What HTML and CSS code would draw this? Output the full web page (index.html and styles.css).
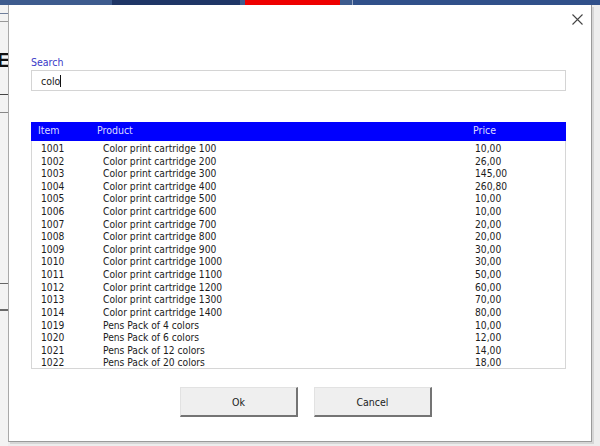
FILE: index.html
```html
<!DOCTYPE html>
<html>
<head>
<meta charset="utf-8">
<link rel="stylesheet" href="styles.css">
</head>
<body>
<div class="app">
  <div class="topbar">
    <span class="seg seg-a"></span>
    <span class="seg seg-b"></span>
    <span class="seg seg-c"></span>
    <span class="seg seg-red"></span>
    <span class="seg seg-c2"></span>
    <span class="seg seg-sep"></span>
    <span class="seg seg-rest"></span>
  </div>
  <div class="back">
    <div class="strip">
      <div class="sl l1"></div>
      <div class="sl l2"></div>
      <div class="big-e">E</div>
      <div class="sl l3"></div>
      <div class="sl l4"></div>
      <div class="sl l5"></div>
      <div class="sl l6"></div>
    </div>
  </div>

  <div class="dialog">
    <button class="close" aria-label="Close">
      <svg width="11" height="11" viewBox="0 0 11 11"><path d="M0.5 0.5 L10.5 10.5 M10.5 0.5 L0.5 10.5" stroke="#444" stroke-width="1.1" fill="none"/></svg>
    </button>
    <label class="search-label">Search</label>
    <div class="search-box"><span class="typed">colo</span><span class="caret"></span></div>

    <div class="list">
      <div class="list-head">
        <span>Item</span><span>Product</span><span>Price</span>
      </div>
      <div class="list-body">
        <div class="row"><span>1001</span><span>Color print cartridge 100</span><span>10,00</span></div>
        <div class="row"><span>1002</span><span>Color print cartridge 200</span><span>26,00</span></div>
        <div class="row"><span>1003</span><span>Color print cartridge 300</span><span>145,00</span></div>
        <div class="row"><span>1004</span><span>Color print cartridge 400</span><span>260,80</span></div>
        <div class="row"><span>1005</span><span>Color print cartridge 500</span><span>10,00</span></div>
        <div class="row"><span>1006</span><span>Color print cartridge 600</span><span>10,00</span></div>
        <div class="row"><span>1007</span><span>Color print cartridge 700</span><span>20,00</span></div>
        <div class="row"><span>1008</span><span>Color print cartridge 800</span><span>20,00</span></div>
        <div class="row"><span>1009</span><span>Color print cartridge 900</span><span>30,00</span></div>
        <div class="row"><span>1010</span><span>Color print cartridge 1000</span><span>30,00</span></div>
        <div class="row"><span>1011</span><span>Color print cartridge 1100</span><span>50,00</span></div>
        <div class="row"><span>1012</span><span>Color print cartridge 1200</span><span>60,00</span></div>
        <div class="row"><span>1013</span><span>Color print cartridge 1300</span><span>70,00</span></div>
        <div class="row"><span>1014</span><span>Color print cartridge 1400</span><span>80,00</span></div>
        <div class="row"><span>1019</span><span>Pens Pack of 4 colors</span><span>10,00</span></div>
        <div class="row"><span>1020</span><span>Pens Pack of 6 colors</span><span>12,00</span></div>
        <div class="row"><span>1021</span><span>Pens Pack of 12 colors</span><span>14,00</span></div>
        <div class="row"><span>1022</span><span>Pens Pack of 20 colors</span><span>18,00</span></div>
      </div>
    </div>

    <div class="buttons">
      <button class="btn">Ok</button>
      <button class="btn">Cancel</button>
    </div>
  </div>
</div>
</body>
</html>
```
FILE: styles.css
```css
html, body {
  margin: 0;
  padding: 0;
}
body {
  width: 600px;
  height: 446px;
  overflow: hidden;
  background: #ededed;
  font-family: "DejaVu Sans Condensed", "DejaVu Sans", sans-serif;
  font-stretch: condensed;
}
.app {
  position: relative;
  width: 600px;
  height: 446px;
}
.topbar {
  display: flex;
  height: 5px;
}
.seg { display: block; height: 5px; }
.seg-a { width: 112px; background: #3d5b8e; }
.seg-b { width: 128px; background: #1f3666; }
.seg-c { width: 5px; background: #3d5b8e; }
.seg-red { width: 95px; background: #ee0000; }
.seg-c2 { width: 12px; background: #3d5b8e; }
.seg-sep { width: 1px; background: #9aa9c6; }
.seg-rest { flex: 1; background: #30508a; }

.back {
  display: flex;
  height: 441px;
}
.strip {
  position: relative;
  width: 8px;
  overflow: hidden;
  background: #f3f3f3;
}
.sl {
  position: absolute;
  left: 0;
  width: 8px;
  height: 1px;
  background: #555;
}
.l1 { top: 8px; background: #6f7f9c; }
.l2 { top: 16px; background: #999; }
.l3 { top: 89px; background: #444; }
.l4 { top: 107px; background: #888; }
.l5 { top: 278px; background: #666; }
.l6 { top: 304px; height: 2px; background: #6a6a6a; }
.big-e {
  position: absolute;
  top: 43px;
  left: -3px;
  font-family: "Liberation Sans", sans-serif;
  font-weight: bold;
  font-size: 21px;
  line-height: 24px;
  color: #111;
}

.dialog {
  position: absolute;
  left: 8px;
  top: 5px;
  width: 584px;
  height: 437px;
  box-sizing: border-box;
  background: #fff;
  border-left: 1px solid #a9a9a9;
  border-right: 1px solid #9a9a9a;
  border-bottom: 1px solid #9a9a9a;
  box-shadow: 2px 2px 0 #d6d6d6;
  padding: 50px 25px 0 22px;
  display: flex;
  flex-direction: column;
}
.close {
  position: absolute;
  top: 8px;
  left: 562px;
  width: 12px;
  height: 12px;
  padding: 0;
  border: 0;
  background: transparent;
  display: flex;
  align-items: center;
  justify-content: center;
}
.search-label {
  font-size: 10.5px;
  line-height: 14px;
  color: #3a3ac8;
  height: 14px;
}
.search-box {
  margin-top: 1px;
  height: 21px;
  box-sizing: border-box;
  border: 1px solid #d4d4d4;
  display: flex;
  align-items: center;
  padding-left: 9px;
  font-size: 10.5px;
  color: #1a1a1a;
}
.caret {
  display: inline-block;
  width: 1px;
  height: 12px;
  background: #111;
}

.list {
  margin-top: 31px;
  display: flex;
  flex-direction: column;
}
.list-head {
  height: 19px;
  box-sizing: border-box;
  background: #0000ff;
  color: #dcdcff;
  font-size: 10.5px;
  line-height: 14px;
  padding: 1px 0 0 7px;
  display: grid;
  grid-template-columns: 59px 376px 1fr;
}
.list-body {
  border: 1px solid #d6d6d6;
  border-top: 0;
  padding: 2px 0 0 0;
  height: 228px;
  box-sizing: border-box;
  font-size: 10.2px;
  color: #1c1c1c;
}
.row {
  display: grid;
  grid-template-columns: 62px 372px 1fr;
  padding-left: 9px;
  height: 12.62px;
  line-height: 12.62px;
  white-space: nowrap;
}

.buttons {
  margin-top: 18px;
  display: flex;
  justify-content: flex-start;
  gap: 16px;
  padding-left: 149px;
}
.btn {
  width: 118px;
  height: 30px;
  box-sizing: border-box;
  background: #efefef;
  border-top: 1px solid #e2e2e2;
  border-left: 1px solid #e2e2e2;
  border-right: 2px solid #747474;
  border-bottom: 2px solid #747474;
  font-family: "DejaVu Sans Condensed", "DejaVu Sans", sans-serif;
  font-stretch: condensed;
  font-size: 10.5px;
  color: #222;
  padding: 0;
}
```
